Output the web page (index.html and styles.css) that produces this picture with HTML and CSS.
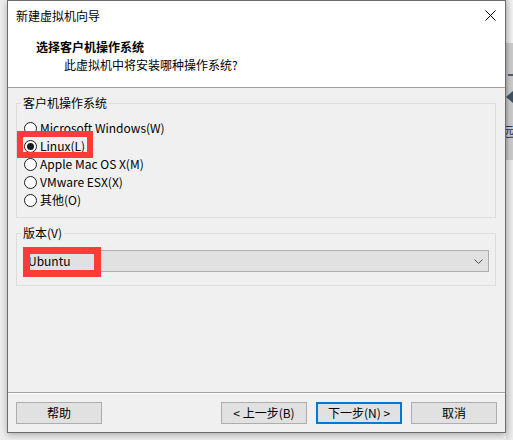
FILE: index.html
```html
<!DOCTYPE html>
<html lang="zh-CN">
<head>
<meta charset="utf-8">
<title>新建虚拟机向导</title>
<link rel="stylesheet" href="styles.css">
</head>
<body>
<div class="screen">
  <div class="left-gap"></div>
  <div class="dialog">
    <div class="header">
      <div class="titlebar">
        <span class="title">新建虚拟机向导</span>
        <svg class="close" width="11" height="11" viewBox="0 0 11 11"><path d="M0.5 0.5 L10.5 10.5 M10.5 0.5 L0.5 10.5" stroke="#000" stroke-width="1" fill="none"/></svg>
      </div>
      <div class="heading">选择客户机操作系统</div>
      <div class="subheading">此虚拟机中将安装哪种操作系统?</div>
    </div>
    <div class="body">
      <fieldset class="group group-os">
        <legend>客户机操作系统</legend>
        <div class="radio-row"><span class="radio"></span>Microsoft Windows(W)</div>
        <div class="radio-row"><span class="radio checked"></span>Linux(L)<span class="mark mark-linux"></span></div>
        <div class="radio-row"><span class="radio"></span>Apple Mac OS X(M)</div>
        <div class="radio-row"><span class="radio"></span>VMware ESX(X)</div>
        <div class="radio-row"><span class="radio"></span>其他(O)</div>
      </fieldset>
      <fieldset class="group group-ver">
        <legend>版本(V)</legend>
        <div class="combo">
          <span class="combo-text">Ubuntu</span>
          <svg class="chevron" width="9" height="5" viewBox="0 0 9 5"><path d="M0.5 0.5 L4.5 4.5 L8.5 0.5" stroke="#505050" stroke-width="1" fill="none"/></svg>
          <span class="mark mark-ubuntu"></span>
        </div>
      </fieldset>
    </div>
    <div class="footer">
      <div class="btn">帮助</div>
      <div class="spacer"></div>
      <div class="btn">&lt; 上一步(B)</div>
      <div class="btn primary">下一步(N) &gt;</div>
      <div class="btn">取消</div>
    </div>
  </div>
  <div class="right-strip">
    <div class="rs-top"></div>
    <div class="rs-main">
      <div class="rs-dash"></div>
      <svg class="rs-arrow" width="7" height="12" viewBox="0 0 7 12"><path d="M7 0 L7 12 L0 6 Z" fill="#43525f"/></svg>
      <div class="rs-glyph">远</div>
    </div>
    <div class="rs-bottom"></div>
  </div>
</div>
</body>
</html>
```

FILE: styles.css
```css
html, body {
  margin: 0;
  padding: 0;
}

body {
  background: #eeeeee;
  font-family: "Noto Sans CJK SC", "Noto Sans", sans-serif;
  font-size: 12px;
  line-height: 18px;
  color: #000;
}

.screen {
  display: flex;
  width: 513px;
  height: 440px;
  overflow: hidden;
}

.left-gap {
  width: 7px;
  flex: none;
}

.dialog {
  flex: none;
  width: 499px;
  height: 433px;
  box-sizing: border-box;
  border: 1px solid #6c6c6c;
  background: #f0f0f0;
  display: flex;
  flex-direction: column;
  box-shadow: 0 2px 7px rgba(0, 0, 0, 0.28);
  position: relative;
  z-index: 1;
}

/* header */
.header {
  flex: none;
  height: 86px;
  background: #fff;
  border-bottom: 1px solid #a0a0a0;
}

.titlebar {
  height: 29px;
  display: flex;
  align-items: center;
  justify-content: space-between;
  padding: 0 9px 0 8px;
}

.close {
  display: block;
}

.heading {
  font-weight: bold;
  line-height: 17px;
  margin-top: 8px;
  padding-left: 28px;
}

.subheading {
  line-height: 17px;
  margin-top: 1px;
  padding-left: 56px;
}

/* body */
.body {
  flex: 1;
  padding: 7px 9px 0 8px;
}

.group {
  margin: 0;
  min-width: 0;
  border: 1px solid #dcdcdc;
}

.group legend {
  padding: 0 2px;
  margin-left: -2px;
  line-height: 16px;
}

.group-os {
  padding: 8px 6px 8px 6px;
}

.group-ver {
  margin-top: 7px;
  padding: 9px 6px 13px 6px;
}

.radio-row {
  position: relative;
  display: flex;
  align-items: center;
  height: 18px;
}

.radio {
  width: 13px;
  height: 13px;
  box-sizing: border-box;
  border: 1px solid #1c1c1c;
  border-radius: 50%;
  background: #fff;
  margin: 0 3px 0 1px;
  display: flex;
  align-items: center;
  justify-content: center;
  flex: none;
}

.radio.checked::after {
  content: "";
  width: 7px;
  height: 7px;
  border-radius: 50%;
  background: #1a1a1a;
}

.combo {
  position: relative;
  height: 22px;
  box-sizing: border-box;
  border: 1px solid #adadad;
  background: #e1e1e1;
  display: flex;
  align-items: center;
  justify-content: space-between;
  padding: 0 5px 0 4px;
}

.chevron {
  display: block;
}

/* red annotation frames */
.mark {
  position: absolute;
  box-sizing: border-box;
  border: 6px solid #fe3b3b;
  pointer-events: none;
}

.mark-linux {
  left: -6px;
  top: -6px;
  width: 76px;
  height: 27px;
}

.mark-ubuntu {
  left: -1px;
  top: -4px;
  width: 78px;
  height: 30px;
  border-width: 7px;
}

/* footer */
.footer {
  flex: none;
  height: 40px;
  box-sizing: border-box;
  border-top: 1px solid #a0a0a0;
  box-shadow: inset 0 1px 0 #ffffff;
  display: flex;
  align-items: flex-start;
  gap: 9px;
  padding: 9px 8px 0 8px;
}

.btn {
  width: 86px;
  height: 22px;
  box-sizing: border-box;
  border: 1px solid #adadad;
  background: #e1e1e1;
  display: flex;
  align-items: center;
  justify-content: center;
  flex: none;
}

.btn.primary {
  border: 2px solid #0078d7;
}

.spacer {
  flex: 1;
}

/* background window behind the dialog */
.right-strip {
  flex: 1;
  display: flex;
  flex-direction: column;
}

.rs-top {
  height: 43px;
  background: linear-gradient(to right, #dcdcdc, #f6f6f6);
}

.rs-main {
  height: 117px;
  background: linear-gradient(to right, #b4b4b4, #cacaca 3px, #cacaca);
  overflow: hidden;
}

.rs-dash {
  margin: 31px 0 0 2px;
  height: 2px;
  background: #4f5d6b;
}

.rs-arrow {
  display: block;
  margin-top: 15px;
}

.rs-glyph {
  margin: 21px 0 0 -5px;
  font-size: 13px;
  line-height: 14px;
  color: #2d3d55;
  white-space: nowrap;
}

.rs-bottom {
  flex: 1;
  background: linear-gradient(to right, #dedede, #eeeeee);
}
```
